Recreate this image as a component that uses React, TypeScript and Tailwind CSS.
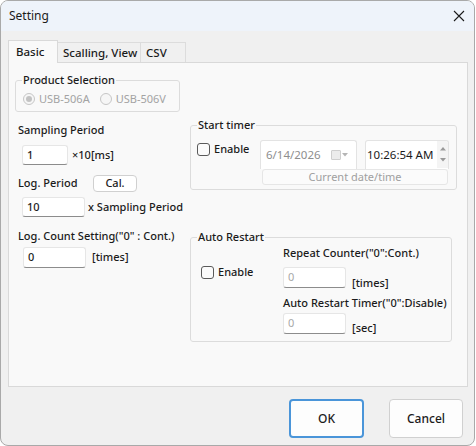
import React from "react";

const F = { fontFamily: '"Noto Sans", "Open Sans", sans-serif' };

function GroupBox({ title, className, children }: { title: string; className: string; children: React.ReactNode }) {
  return (
    <fieldset className={`border border-[#dcdcdc] rounded-[3px] ${className}`}>
      <legend className="ml-[6px] px-[1px] h-[16px] leading-[16px]">{title}</legend>
      {children}
    </fieldset>
  );
}

function Radio({ checked, label }: { checked?: boolean; label: string }) {
  return (
    <div className="flex items-center gap-[4px] text-[#a3a3a3]">
      <div className="w-[12px] h-[12px] rounded-full border border-[#c6c6c6] bg-[#f6f6f6] flex items-center justify-center">
        {checked && <div className="w-[6px] h-[6px] rounded-full bg-[#c2c2c2]" />}
      </div>
      <span>{label}</span>
    </div>
  );
}

function Check({ label }: { label: string }) {
  return (
    <div className="flex items-center gap-[4px]">
      <div className="w-[13px] h-[13px] rounded-[3px] border border-[#5a5a5a] bg-[#fbfbfb]" />
      <span>{label}</span>
    </div>
  );
}

function Input({ value, w, h = 20, disabled }: { value: string; w: number; h?: number; disabled?: boolean }) {
  return (
    <div
      className={`bg-white border border-[#e6e6e6] border-b-[#8c8c8c] rounded-[3px] pl-[4px] flex items-center ${disabled ? "text-[#a8a8a8] font-normal" : ""}`}
      style={{ width: w, height: h }}
    >
      {value}
    </div>
  );
}

export default function App() {
  return (
    <div className="w-[476px] h-[446px] bg-white text-[11px] text-[#1b1b1b] font-medium" style={F}>
      <div className="w-[475px] h-[446px] border border-[#a9a9a9] rounded-[8px] overflow-hidden bg-[#f0f0f0] flex flex-col">
        {/* title bar */}
        <div className="h-[30px] bg-[#eef3fa] flex items-center justify-between pl-[8px] pr-[7px] shrink-0">
          <span className="text-[12px] font-normal">Setting</span>
          <svg width="12" height="12" viewBox="0 0 12 12" className="mr-[2px]">
            <path d="M1 1 L11 11 M11 1 L1 11" stroke="#1b1b1b" strokeWidth="1.1" fill="none" />
          </svg>
        </div>
        {/* tabs */}
        <div className="mt-[9px] ml-[7px] flex items-end h-[22px] text-[11.5px] whitespace-nowrap">
          <div className="relative z-10 w-[50px] h-[23px] -mb-px bg-[#f9f9f9] border border-[#d9d9d9] border-b-0 pl-[7px] pt-[2px]">Basic</div>
          <div className="w-[83px] h-[20px] bg-[#f0f0f0] border border-[#dcdcdc] border-l-0 border-b-0 pl-[5px] pt-[1px]">Scalling, View</div>
          <div className="w-[45px] h-[20px] bg-[#f0f0f0] border border-[#dcdcdc] border-l-0 border-b-0 pl-[5px] pt-[1px]">CSV</div>
        </div>
        {/* panel */}
        <div className="ml-[7px] w-[460px] h-[325px] bg-[#f9f9f9] border border-[#d9d9d9] pl-[6px] pt-[9px]">
          <GroupBox title="Product Selection" className="w-[165px] h-[40px]">
            <div className="flex items-center gap-[10px] pl-[7px] pt-[3px] h-[19px] font-normal">
              <Radio checked label="USB-506A" />
              <Radio label="USB-506V" />
            </div>
          </GroupBox>
          <div className="flex mt-[5px]">
            {/* left column */}
            <div className="w-[175px] pl-[3px] flex flex-col">
              <div className="mt-[5px] h-[16px] leading-[16px]">Sampling Period</div>
              <div className="mt-[7px] ml-[4px] flex items-center gap-[4px]">
                <Input value="1" w={46} />
                <span>×10[ms]</span>
              </div>
              <div className="mt-[10px] flex items-center h-[17px]">
                <span className="w-[75px]">Log. Period</span>
                <div className="w-[44px] h-[17px] bg-white border border-[#d0d0d0] rounded-[4px] flex items-center justify-center">Cal.</div>
              </div>
              <div className="mt-[5px] ml-[4px] flex items-center gap-[3px]">
                <Input value="10" w={63} />
                <span>x Sampling Period</span>
              </div>
              <div className="mt-[11px] h-[16px] leading-[16px] whitespace-nowrap">Log. Count Setting("0" : Cont.)</div>
              <div className="mt-[3px] ml-[5px] flex items-center gap-[6px]">
                <Input value="0" w={63} h={21} />
                <span>[times]</span>
              </div>
            </div>
            {/* right column */}
            <div className="flex flex-col">
              <GroupBox title="Start timer" className="w-[267px] h-[73px]">
                <div className="flex pt-[7px] pl-[6px]">
                  <div className="w-[63px] pt-[1px] h-[14px]">
                    <Check label="Enable" />
                  </div>
                  <div className="flex flex-col">
                    <div className="flex gap-[8px]">
                      <div className="w-[97px] h-[29px] bg-white border border-[#e3e3e3] border-b-0 rounded-t-[3px] flex items-center pl-[5px] pb-[1px] text-[#8e8e8e] font-normal text-[11.5px]">
                        <span className="w-[65px]">6/14/2026</span>
                        <div className="w-[10px] h-[10px] border border-[#cfcfcf] bg-[#ececec] rounded-[1px]" />
                        <svg width="6" height="4" viewBox="0 0 6 4" className="ml-[1px]"><path d="M0 0 L6 0 L3 3.5 Z" fill="#b5b5b5" /></svg>
                      </div>
                      <div className="w-[84px] h-[29px] bg-white border border-[#e3e3e3] border-b-0 rounded-t-[3px] flex items-center pl-[1px] pb-[1px] font-normal overflow-hidden text-[11.5px]">
                        <span className="w-[70px] overflow-hidden whitespace-nowrap">10:26:54 AM</span>
                        <div className="w-[11px] h-[27px] bg-[#f4f4f4] flex flex-col items-center justify-around py-[2px]">
                          <svg width="6" height="4" viewBox="0 0 6 4"><path d="M0 3.5 L6 3.5 L3 0 Z" fill="#9a9a9a" /></svg>
                          <svg width="6" height="4" viewBox="0 0 6 4"><path d="M0 0 L6 0 L3 3.5 Z" fill="#9a9a9a" /></svg>
                        </div>
                      </div>
                    </div>
                    <div className="ml-[2px] w-[186px] h-[16px] bg-[#fbfbfb] border border-[#e6e6e6] rounded-[3px] flex items-center justify-center text-[#a0a0a0] font-normal">
                      Current date/time
                    </div>
                  </div>
                </div>
              </GroupBox>
              <GroupBox title="Auto Restart" className="mt-[39px] w-[262px] h-[113px]">
                <div className="flex">
                  <div className="w-[92px] pl-[10px] pt-[19px]">
                    <Check label="Enable" />
                  </div>
                  <div className="flex flex-col">
                    <div className="h-[16px] leading-[16px]">Repeat Counter("0":Cont.)</div>
                    <div className="mt-[6px] flex items-end gap-[6px]">
                      <Input value="0" w={63} h={21} disabled />
                      <span className="leading-[14px] -mb-[2px]">[times]</span>
                    </div>
                    <div className="mt-[7px] h-[16px] leading-[16px] whitespace-nowrap">Auto Restart Timer("0":Disable)</div>
                    <div className="mt-[2px] flex items-end gap-[6px]">
                      <Input value="0" w={63} h={21} disabled />
                      <span className="leading-[14px] -mb-[1px]">[sec]</span>
                    </div>
                  </div>
                </div>
              </GroupBox>
            </div>
          </div>
        </div>
        {/* buttons */}
        <div className="flex justify-end gap-[25px] pr-[11px] mt-[12px]">
          <div className="w-[75px] h-[39px] bg-[#fdfdfd] border-2 border-[#4a95d9] rounded-[4px] flex items-center justify-center text-[12px]">OK</div>
          <div className="w-[74px] h-[39px] bg-[#fdfdfd] border border-[#d0d0d0] rounded-[4px] flex items-center justify-center text-[12px]">Cancel</div>
        </div>
      </div>
    </div>
  );
}
